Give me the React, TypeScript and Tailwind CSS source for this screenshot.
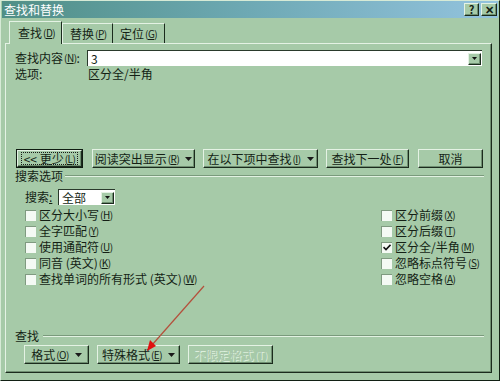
import React from "react"

const raised =
  "border border-t-[#e4f2e4] border-l-[#e4f2e4] border-r-[#1b2b1d] border-b-[#1b2b1d] shadow-[inset_-1px_-1px_0_#6f8f71]"

function Key({ k }: { k: string }) {
  return (
    <span className="ml-[1px] text-[10px] tracking-[-0.5px]">
      (<span className="underline">{k}</span>)
    </span>
  )
}

function Caret() {
  return (
    <svg width="7" height="4" viewBox="0 0 7 4" className="ml-[6px] shrink-0">
      <path d="M0 0h7L3.5 4z" fill="#1a1a1a" />
    </svg>
  )
}

function Btn({
  w,
  children,
  focus,
  disabled,
}: {
  w: string
  children: React.ReactNode
  focus?: boolean
  disabled?: boolean
}) {
  return (
    <div className={`${w} h-[19px] shrink-0 ${focus ? "border border-[#101c12]" : ""}`}>
      <div
        className={`${raised} h-full w-full flex items-center justify-center whitespace-nowrap ${
          disabled ? "text-[#a9c6ab] [text-shadow:1px_1px_0_#dcefdc]" : ""
        }`}
      >
        {focus ? (
          <div className="border border-dotted border-[#1a1a1a] px-[2px] h-[13px] flex items-center whitespace-nowrap">
            {children}
          </div>
        ) : (
          children
        )}
      </div>
    </div>
  )
}

function Check({ on }: { on?: boolean }) {
  return (
    <div className="w-[11px] h-[11px] bg-[#f4faf4] border-t border-l border-[#7f9a80] shrink-0 flex items-center justify-center">
      {on && (
        <svg width="8" height="7" viewBox="0 0 8 7">
          <path d="M0.5 3.2 3 5.6 7.5 0.8" stroke="#111" strokeWidth="1.6" fill="none" />
        </svg>
      )}
    </div>
  )
}

function Opt({ label, k, on }: { label: string; k: string; on?: boolean }) {
  return (
    <div className="h-[16px] flex items-center whitespace-nowrap">
      <Check on={on} />
      <span className="ml-[3px] flex items-center">
        {label}
        <Key k={k} />
      </span>
    </div>
  )
}

function Groove() {
  return <div className="flex-1 h-[2px] border-t border-[#7a9a7c] border-b border-b-[#e2f2e2]" />
}

function Arrow() {
  return (
    <div className={`${raised} bg-[#a6caa8] w-[13px] h-[12px] flex items-center justify-center`}>
      <svg width="5" height="3" viewBox="0 0 5 3">
        <path d="M0 0h5L2.5 3z" fill="#111" />
      </svg>
    </div>
  )
}

export default function App() {
  return (
    <div
      className="relative w-[500px] h-[381px] overflow-hidden bg-[#a6caa8] text-[12px] leading-none text-[#141f15] border border-t-[#d6ead6] border-l-[#d6ead6] border-r-[#122014] border-b-[#122014]"
      style={{ fontFamily: '"Noto Sans CJK SC", "Noto Sans", sans-serif' }}
    >
      {/* title bar */}
      <div className="h-[17px] mx-[1px] flex items-center justify-between bg-gradient-to-r from-[#508f86] via-[#6ea9b4] to-[#93c3de] pl-[2px] pr-[1px]">
        <span className="text-white text-[12px]">查找和替换</span>
        <div className="flex gap-[2px]">
          <div className={`${raised} w-[15px] h-[13px] bg-[#a6caa8] flex items-center justify-center text-[11px] font-bold`}>?</div>
          <div className={`${raised} w-[16px] h-[13px] bg-[#a6caa8] flex items-center justify-center text-[11px] font-bold`}>✕</div>
        </div>
      </div>

      {/* tabs */}
      <div className="mt-[3px] ml-[8px] flex items-end h-[22px] whitespace-nowrap">
        <div className="relative z-10 -mb-[1px] h-[23px] w-[53px] bg-[#a6caa8] border-t border-l border-[#e4f2e4] border-r border-r-[#1b2b1d] flex items-center pl-[8px]">
          查找<Key k="D" />
        </div>
        <div className="h-[20px] w-[51px] border-t border-l border-[#e4f2e4] border-r border-r-[#1b2b1d] flex items-center pl-[7px]">
          替换<Key k="P" />
        </div>
        <div className="h-[20px] w-[52px] border-t border-[#e4f2e4] border-r border-r-[#1b2b1d] flex items-center pl-[7px]">
          定位<Key k="G" />
        </div>
      </div>

      {/* panel */}
      <div className="ml-[4px] w-[487px] h-[330px] border border-t-[#e4f2e4] border-l-[#e4f2e4] border-r-[#1b2b1d] border-b-[#1b2b1d] shadow-[inset_-1px_-1px_0_#6f8f71] pt-[6px] pl-[9px] pr-[7px] whitespace-nowrap">
        <div className="flex items-center h-[16px]">
          <span className="w-[72px] flex items-center">
            查找内容<Key k="N" />:
          </span>
          <div className="w-[395px] h-[16px] bg-white border-t border-l border-[#2a3a2c] flex items-center justify-between pl-[3px] pr-[1px]">
            <span>3</span>
            <Arrow />
          </div>
        </div>
        <div className="flex items-center h-[14px] mt-[1px]">
          <span className="w-[73px]">选项:</span>
          <span>区分全/半角</span>
        </div>

        <div className="flex items-center mt-[68px] ml-[1px]">
          <Btn w="w-[67px]" focus>
            &lt;&lt; 更少<Key k="L" />
          </Btn>
          <div className="w-[9px]" />
          <Btn w="w-[103px]">
            阅读突出显示<Key k="R" />
            <Caret />
          </Btn>
          <div className="w-[8px]" />
          <Btn w="w-[115px]">
            在以下项中查找<Key k="I" />
            <Caret />
          </Btn>
          <div className="w-[8px]" />
          <Btn w="w-[83px]">
            查找下一处<Key k="F" />
          </Btn>
          <div className="w-[9px]" />
          <Btn w="w-[65px]">取消</Btn>
        </div>

        <div className="flex items-center h-[13px] mt-[1px]">
          <span className="mr-[2px]">搜索选项</span>
          <Groove />
        </div>

        <div className="flex items-center h-[16px] mt-[7px] ml-[10px]">
          <span className="w-[33px]">
            搜索<span className="underline">:</span>
          </span>
          <div className="w-[57px] h-[16px] bg-white border-t border-l border-[#2a3a2c] flex items-center justify-between pl-[3px] pr-[1px]">
            <span>全部</span>
            <Arrow />
          </div>
        </div>

        <div className="flex mt-[2px] ml-[10px]">
          <div className="w-[356px] flex flex-col">
            <Opt label="区分大小写" k="H" />
            <Opt label="全字匹配" k="Y" />
            <Opt label="使用通配符" k="U" />
            <Opt label="同音 (英文)" k="K" />
            <Opt label="查找单词的所有形式 (英文)" k="W" />
          </div>
          <div className="flex flex-col">
            <Opt label="区分前缀" k="X" />
            <Opt label="区分后缀" k="T" />
            <Opt label="区分全/半角" k="M" on />
            <Opt label="忽略标点符号" k="S" />
            <Opt label="忽略空格" k="A" />
          </div>
        </div>

        <div className="flex items-center h-[13px] mt-[42px]">
          <span className="mr-[4px]">查找</span>
          <Groove />
        </div>

        <div className="flex items-center mt-[3px] ml-[9px]">
          <Btn w="w-[65px]">
            格式<Key k="O" />
            <Caret />
          </Btn>
          <div className="w-[8px]" />
          <Btn w="w-[83px]">
            特殊格式<Key k="E" />
            <Caret />
          </Btn>
          <div className="w-[8px]" />
          <Btn w="w-[85px]" disabled>
            不限定格式<span className="ml-[1px] text-[10px]">(T)</span>
          </Btn>
        </div>
      </div>

      {/* red annotation arrow */}
      <svg className="absolute left-0 top-0 pointer-events-none" width="500" height="381">
        <line x1="203" y1="285" x2="151" y2="344" stroke="#b4503c" strokeWidth="1.2" />
        <path d="M146 350 L149 339 L155 345 Z" fill="#e01010" />
      </svg>
    </div>
  )
}
